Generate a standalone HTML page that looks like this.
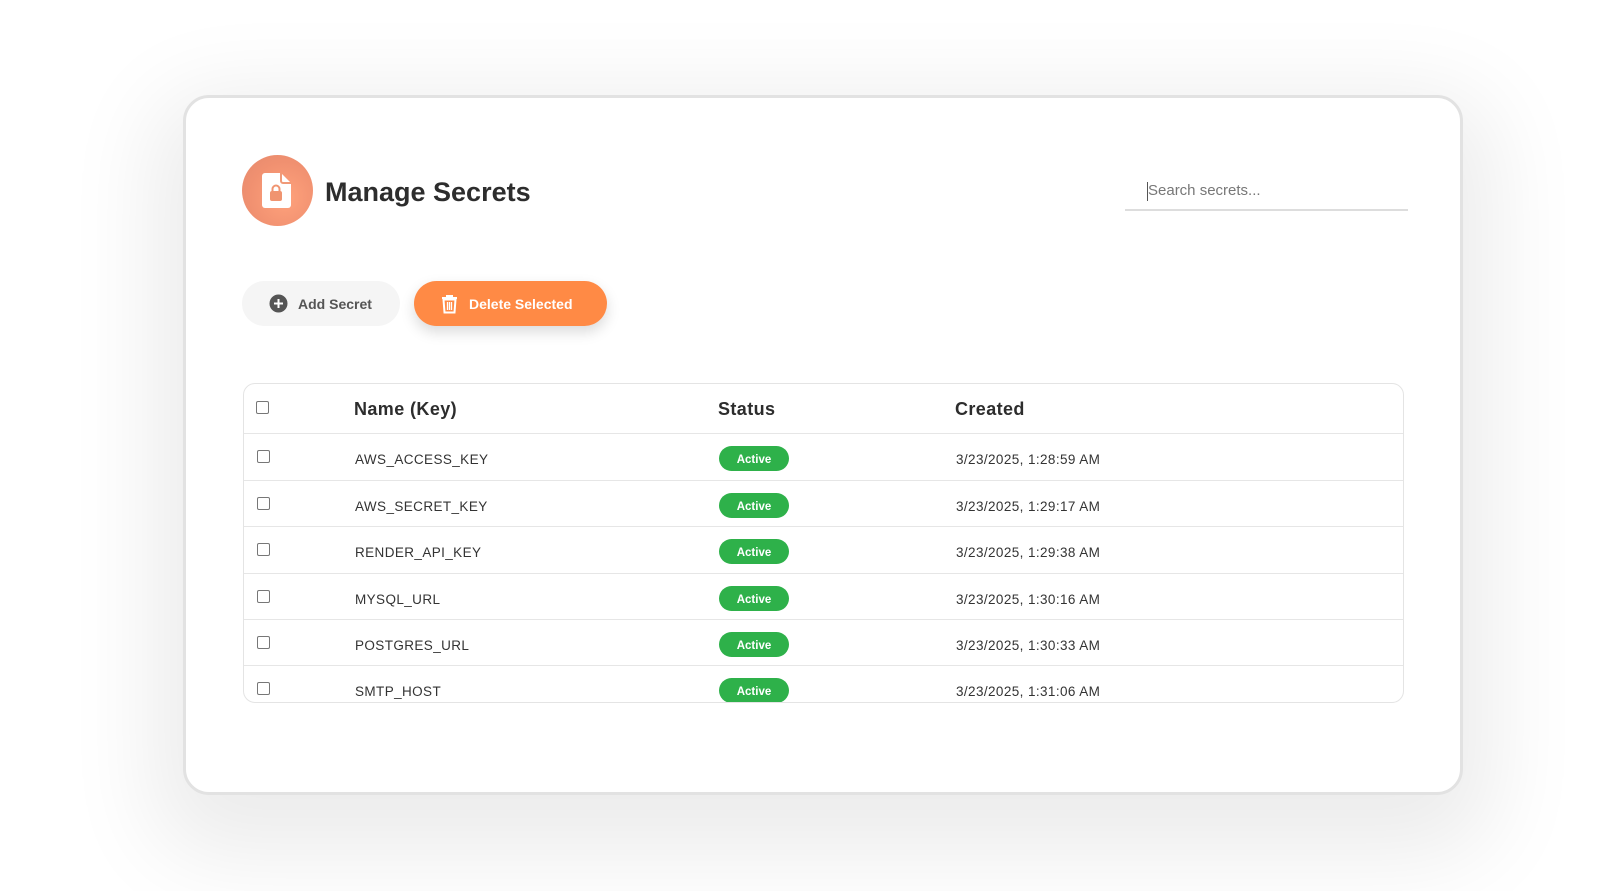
<!DOCTYPE html>
<html><head><meta charset="utf-8"><style>
*{box-sizing:border-box;margin:0;padding:0}
body{width:1616px;height:891px;background:#fff;font-family:"Liberation Sans",sans-serif;position:relative;overflow:hidden;color:#333}
.card{position:absolute;left:183px;top:95px;width:1280px;height:700px;border:3px solid #e2e2e2;border-radius:26px;background:#fff;box-shadow:0 30px 90px 30px rgba(0,0,0,0.08)}
.logo{position:absolute;left:242px;top:155px;width:71px;height:71px;border-radius:50%;background:radial-gradient(circle at 60% 60%,#ffa27c,#f09070 60%,#e48a6d)}
.title{position:absolute;left:325px;top:177px;font-size:27px;font-weight:bold;color:#2d2d2d}
.search{position:absolute;left:1125px;top:182px;width:283px;height:29px;border-bottom:2px solid #ddd;font-size:15px;color:#777;padding-left:23px}
.search:before{content:"";position:absolute;left:22px;top:0px;width:1px;height:19px;background:#555}
.btn{position:absolute;top:281px;height:45px;border-radius:23px;font-size:14px;font-weight:bold;display:flex;align-items:center}
.add{left:242px;width:158px;background:#f5f5f5;color:#555;padding-left:27px}
.del{left:414px;width:193px;background:#ff8a45;color:#fff;padding-left:27px;box-shadow:0 6px 14px rgba(0,0,0,0.15)}
.table{position:absolute;left:243px;top:383px;width:1161px;height:320px;border:1px solid #e4e4e4;border-radius:12px;overflow:hidden}
.row{position:absolute;left:0;width:100%;height:47px;border-top:1px solid #e6e6e6;font-size:13.5px;letter-spacing:0.4px;color:#333}
.row span{position:absolute;top:18px}
.cb{position:absolute;left:13px;width:13px;height:13px;border:1px solid #777;border-radius:2px;background:#fff}
.badge{position:absolute;left:475px;top:12px;width:70px;height:25px;border-radius:13px;background:#2eb14a;color:#fff;font-size:11.5px;font-weight:bold;display:flex;align-items:center;justify-content:center;padding-top:2px;letter-spacing:0}
.hd{position:absolute;top:16px;font-size:18px;font-weight:bold;color:#2d2d2d}
</style></head><body>
<div class="card"></div>
<div class="logo"><svg width="71" height="71" viewBox="0 0 71 71"><path d="M23 18h16l10 10v22a3 3 0 0 1-3 3H23a3 3 0 0 1-3-3V21a3 3 0 0 1 3-3z" fill="#fff"/><path d="M39 18v8a2 2 0 0 0 2 2h8" fill="none" stroke="#f09a78" stroke-width="2"/><rect x="28" y="36" width="12" height="10" rx="2" fill="#f09470"/><path d="M30.5 37v-3a3.5 3.5 0 0 1 7 0v3" fill="none" stroke="#f09470" stroke-width="2"/></svg></div>
<div class="title">Manage Secrets</div>
<div class="search">Search secrets...</div>
<div class="btn add"><svg width="19" height="19" viewBox="0 0 19 19" style="margin-right:10px"><circle cx="9.5" cy="9.5" r="9" fill="#555"/><path d="M9.5 5v9M5 9.5h9" stroke="#fff" stroke-width="2"/></svg>Add Secret</div>
<div class="btn del"><svg width="17" height="20" viewBox="0 0 17 20" style="margin-right:11px"><path d="M1 4h15M6 4V2h5v2" stroke="#fff" stroke-width="2" fill="none"/><path d="M2.5 5.5l1 13h10l1-13z" fill="none" stroke="#fff" stroke-width="2"/><path d="M6.5 8v8M8.5 8v8M10.5 8v8" stroke="#fff" stroke-width="1.3"/></svg>Delete Selected</div>
<div class="table">
<div class="row" style="top:-1px;height:50px;border-top:none"><div class="cb" style="top:18px;left:12px"></div><div class="hd" style="left:110px">Name (Key)</div><div class="hd" style="left:474px">Status</div><div class="hd" style="left:711px">Created</div></div>
<div class="row" style="top:49px"><div class="cb" style="top:16px"></div><span style="left:111px">AWS_ACCESS_KEY</span><div class="badge">Active</div><span style="left:712px">3/23/2025, 1:28:59 AM</span></div>
<div class="row" style="top:96px"><div class="cb" style="top:16px"></div><span style="left:111px">AWS_SECRET_KEY</span><div class="badge">Active</div><span style="left:712px">3/23/2025, 1:29:17 AM</span></div>
<div class="row" style="top:142px"><div class="cb" style="top:16px"></div><span style="left:111px">RENDER_API_KEY</span><div class="badge">Active</div><span style="left:712px">3/23/2025, 1:29:38 AM</span></div>
<div class="row" style="top:189px"><div class="cb" style="top:16px"></div><span style="left:111px">MYSQL_URL</span><div class="badge">Active</div><span style="left:712px">3/23/2025, 1:30:16 AM</span></div>
<div class="row" style="top:235px"><div class="cb" style="top:16px"></div><span style="left:111px">POSTGRES_URL</span><div class="badge">Active</div><span style="left:712px">3/23/2025, 1:30:33 AM</span></div>
<div class="row" style="top:281px"><div class="cb" style="top:16px"></div><span style="left:111px">SMTP_HOST</span><div class="badge">Active</div><span style="left:712px">3/23/2025, 1:31:06 AM</span></div>
</div>
</body></html>
